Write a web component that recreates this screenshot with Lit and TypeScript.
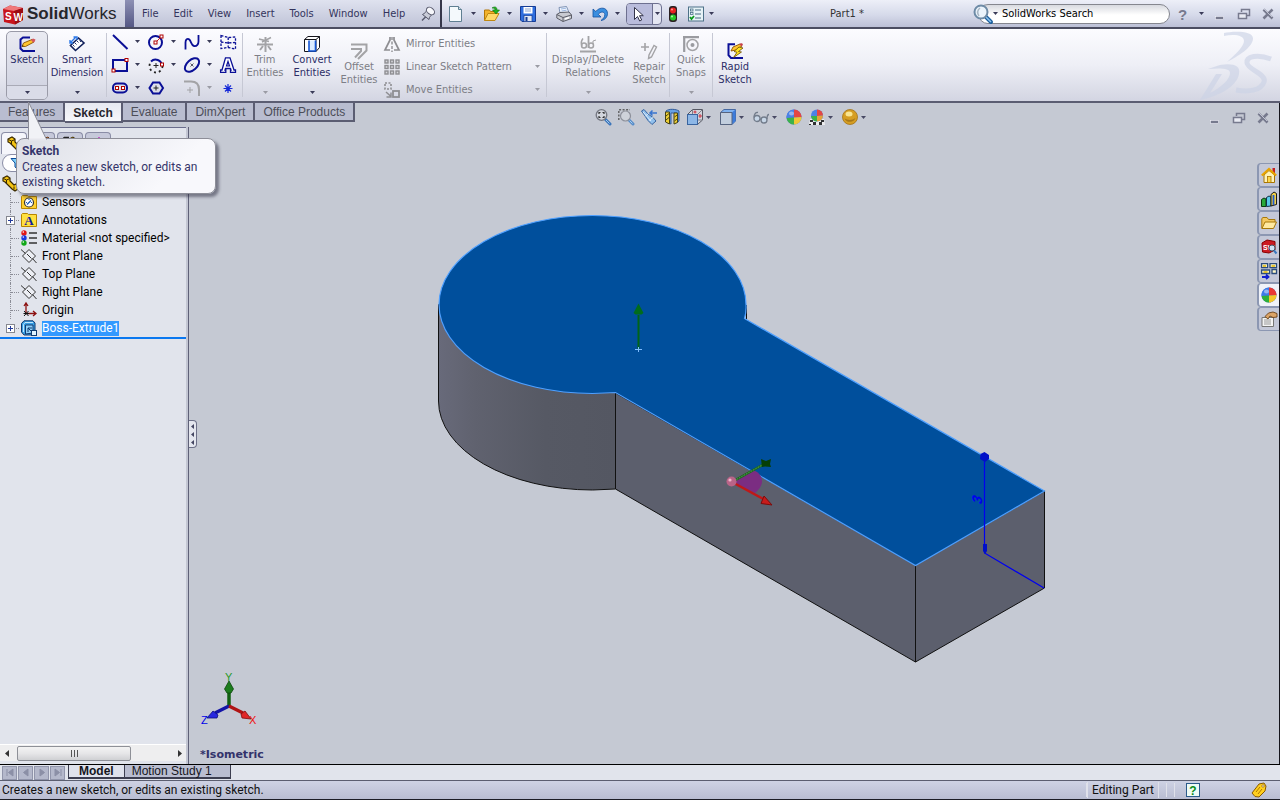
import { LitElement, html, css, svg, nothing, TemplateResult } from "lit";
import { customElement } from "lit/decorators.js";
import { classMap } from "lit/directives/class-map.js";

type Glyph = ReturnType<typeof svg>;

const icon = (body: Glyph, w = 16, h = 16): TemplateResult =>
  html`<svg class="ico" width=${w} height=${h} viewBox="0 0 ${w} ${h}" aria-hidden="true">${body}</svg>`;

const arrow = (muted = false): TemplateResult =>
  html`<svg class="ico" width="5" height="3" viewBox="0 0 5 3" aria-hidden="true">
    <path d="M0 0h5L2.5 3z" fill=${muted ? "#9a9ba4" : "#3a3b58"} />
  </svg>`;

const NAVY = "#0a0f96";
const GREY = "#a3a3a6";
const handle = (x: number, y: number) =>
  svg`<rect x=${x} y=${y} width="3" height="3" fill="#fff" stroke="#b00000" stroke-width="1"/>`;

const I = {
  cubeLogo: svg`<path d="M2 7 9 3.500 22 6 22 18 14 22.500 3 20z" fill="#c8141c"/><path d="M2 7 9 3.500 22 6 13 9z" fill="#f0787a"/><path d="M13 9 22 6V18l-8 4.500z" fill="#9c0c12"/>
    <text x="4" y="18" class="cube">S</text><text x="12.500" y="18.500" class="cube">W</text>`,
  pin: svg`<path d="M2 14.500 6 10.500" stroke="#55576a" stroke-width="1.500"/><path d="M2.500 8.500C5 7 6 6.500 6.500 4l6 4.500c-2 1-3 2-3.500 5z" fill="#c9ccd8" stroke="#55576a"/><ellipse cx="10.500" cy="5" rx="4.500" ry="3.200" transform="rotate(40 10.500 5)" fill="#f6f7fb" stroke="#55576a"/>`,
  newDoc: svg`<path d="M1.500.5h9l3 3v12h-12z" fill="#f4f9fc" stroke="#5f7f92"/><path d="M10.500.5v3h3" fill="#cfe0ea" stroke="#5f7f92"/>`,
  open: svg`<path d="M.5 14.500V4h5l1 1.500h6v3" fill="#f3b32c" stroke="#b37708"/><path d="M.5 14.500 4 7.500h11l-4 7z" fill="#ffd968" stroke="#c08812"/><path d="M8 2c3-2 5-1 5 2h2.500L12 8 8.500 4H11c0-1.500-1-2-3-2z" fill="#22b022" stroke="#0b760b" stroke-width=".6"/>`,
  save: svg`<path d="M.5.5h15v15H2L.5 14z" fill="#2f6ede" stroke="#163c94"/><rect x="3.500" y="1" width="9" height="6.500" fill="#fff"/><path d="M5 3h6M5 5h6" stroke="#8fa6d0"/><rect x="4" y="9.500" width="8" height="6" fill="#dfe6f4" stroke="#163c94" stroke-width=".7"/><rect x="5.500" y="11" width="2" height="4" fill="#163c94"/>`,
  print: svg`<path d="M4 7 3 1.500 10.500.5 13 6.500z" fill="#eef4ff" stroke="#7f93b4"/><path d="M5 3l5-.8M5.500 5l5-.8" stroke="#9db8e0"/><path d="M.8 8.500 4 6.500l9-.5 2.500 3v3.500L7 15.500.8 12z" fill="#c9cbd2" stroke="#5c5e68"/><path d="M.8 8.500 7 11.500l8.500-2.500M7 11.500v4" stroke="#5c5e68" fill="none"/><path d="m9 13 4-1.500" stroke="#fff" stroke-width="1.500"/>`,
  undo: svg`<path d="M1 3v8h8L6.300 8.300C8 5.500 12.500 5 12.800 8.500 13 11 11 13 9 14.500c4-.5 6.500-3.500 6.500-7C15.500 1 7.500.5 3.800 5.500z" fill="#3b8fe0" stroke="#1450a0" stroke-width=".8"/>`,
  cursor: svg`<path d="M3.500 1.500v12l3-3 2.200 4.500 2-1L8.500 9.700h3.800z" fill="#fff" stroke="#33344a"/>`,
  traffic: svg`<rect x="4" y="0" width="8" height="16" rx="3" fill="#2a2020"/><circle cx="8" cy="4.500" r="3" fill="#e82020"/><circle cx="8" cy="11.500" r="3" fill="#28c828"/><circle cx="7" cy="3.500" r="1" fill="#ff9a90"/><circle cx="7" cy="10.500" r="1" fill="#a8ffa0"/>`,
  options: svg`<rect x=".5" y="1" width="15" height="14" fill="#e6f2f6" stroke="#4d7188"/><path d="M7 4h6M7 8h6M7 12h6" stroke="#7b98a8" stroke-width="1.500"/><rect x="2.500" y="3" width="2.500" height="2" fill="none" stroke="#4d7188" stroke-width=".8"/><rect x="2.500" y="6.500" width="2.500" height="2" fill="none" stroke="#4d7188" stroke-width=".8"/><path d="m2 11 1.500 2L6 10" stroke="#0a9a1a" stroke-width="1.800" fill="none"/>`,
  search: svg`<path d="m13 13 5 5" stroke="#1d5f9e" stroke-width="4" stroke-linecap="round"/><path d="m13 13 5 5" stroke="#8cc4ee" stroke-width="1.500"/><circle cx="8" cy="8" r="6.500" fill="#eaf3fb" stroke="#6e8ba6" stroke-width="2"/><path d="M6 12C4 9 4.500 6 7 4" stroke="#a9b7c4" fill="none" stroke-width="1.500"/>`,
  help: svg`<text x="3" y="14" class="q">?</text>`,
  min: svg`<rect x="3.500" y="10.500" width="8" height="3" fill="#777a8e" stroke="#f0f1f8" stroke-width=".6"/>`,
  restore: svg`<path d="M5.500 6V3.500h8v6h-2.500" fill="none" stroke="#777a8e" stroke-width="1.500"/><rect x="2.500" y="7.500" width="8" height="5" fill="#e8eaf2" stroke="#777a8e" stroke-width="1.500"/>`,
  close: svg`<path d="m3.500 3.500 9 9M12.500 3.500l-9 9" stroke="#777a8e" stroke-width="2.600"/><path d="m4 3 8 8" stroke="#d4d7e4" stroke-width=".8"/>`,

  sketch: svg`<path d="M11 1.500H4L1.500 3.500v9L4 15h12" fill="none" stroke=${NAVY} stroke-width="2"/><path d="m3 10.500 1.500-3.500L13 3.500l2 2.500-8.500 4.500z" fill="#ffc52e" stroke="#8a5200" stroke-width=".9"/><path d="m12 4 2-1.500 2.500 1-1 2.500-1.500.5z" fill="#d4565c"/><path d="m3 10.500.7-1.600 1 1.200z" fill="#221"/>`,
  dimension: svg`<path d="M6.500 14.500 1.500 9.500 9.500 2 15 7z" fill="#fff" stroke="#10205a" stroke-width="1.600"/><path d="m4 9 1.500 1.500M6 7l1.500 1.500M8 5l1.500 1.500M10.500 4.500 12 6" stroke="#10205a" stroke-width=".9"/><path d="m1.500 6.500 5-5M1 4v3h3M4.500 1H8v3" fill="none" stroke="#2c78e8" stroke-width="1.400"/>`,
  line: svg`<path d="m1 1 14.500 14" stroke=${NAVY} stroke-width="2"/>`,
  circle: svg`<circle cx="7.500" cy="8.500" r="6.500" fill="none" stroke=${NAVY} stroke-width="2"/><path d="m8 8 5-5" stroke="#c22"/>${handle(6, 7)}${handle(12, 1)}`,
  spline: svg`<path d="M1.500 15.500V8.500c0-3 2-4.500 3.800-3 2 1.800 2 6 4.700 6.500 3 .5 4.500-2 4.500-4.500V1" fill="none" stroke=${NAVY} stroke-width="1.800"/>`,
  planes: svg`<path d="M1 1.500 8.500 3.500 15.500 3v12L8 13.500 1 14.500zM8.200 3.500v10M1 8l7 1 7.500-.5" fill="none" stroke=${NAVY} stroke-width="1.300" stroke-dasharray="2.500 1.500"/>`,
  rect: svg`<rect x="1" y="3" width="14" height="11" fill="none" stroke=${NAVY} stroke-width="2"/>${handle(0, 12)}${handle(13, 1.5)}`,
  arc: svg`<path d="M3 4.500A6.500 6.500 0 0 1 14 8.500" fill="none" stroke=${NAVY} stroke-width="2"/><path d="M14.500 9A6.500 6.500 0 0 1 1.500 9c0-2 .5-3.500 1.500-4.500" fill="none" stroke="#222" stroke-width="1.800" stroke-dasharray="2 3"/><path d="M5.500 8.500h5M8 6v5" stroke="#222"/>${handle(12.5, 6)}`,
  ellipse: svg`<ellipse cx="8" cy="8" rx="8.500" ry="5" transform="rotate(-42 8 8)" fill="none" stroke=${NAVY} stroke-width="2"/><path d="m6.500 6.500 3 3m0-3-3 3" stroke="#334" stroke-width=".8"/>`,
  textA: svg`<path d="M5.500.8h4.500L14 13h1.500v2.300h-5V13H11l-.5-1.500H5.500L5 13h.8v2.300H.6V13H2z" fill="#fff" stroke=${NAVY} stroke-width="1.300"/><path d="M8 4.500 6.500 9h3z" fill="#eef" stroke=${NAVY} stroke-width="1.200"/>`,
  slot: svg`<rect x="1" y="3.500" width="14" height="9" rx="4" fill="none" stroke=${NAVY} stroke-width="2"/>${handle(3.5, 6.5)}${handle(9.5, 6.5)}`,
  polygon: svg`<path d="M5 2.500h6.500L15 8l-3.500 5.500H5L1.500 8z" fill="none" stroke=${NAVY} stroke-width="2"/><path d="M5.500 8h5M8 5.500v5" stroke="#222"/>`,
  fillet: svg`<path d="M0 1.500h7c5 0 8 3 8 8V16" fill="none" stroke=${GREY} stroke-width="2"/><path d="M3 10h6M6 7v6" stroke=${GREY}/>`,
  point: svg`<path d="M3.500 8.500h9M8 4v9M5 5.500l6 6m0-6-6 6" stroke="#1428d8" stroke-width="1.200"/>`,
  trim: svg`<path d="M0 8.500h16M8.500 1v15" stroke=${GREY} stroke-width="2"/><path d="M2 3 12 5.500M14 1.500 5 6" stroke=${GREY} stroke-width="1.500"/><path d="m6 10-3 4M11 10l3 4" stroke=${GREY} stroke-width="2"/>`,
  convert: svg`<path d="M.5 3.500 4 .5h11.500v11L12 15.500H.5zM.5 3.500H12v12M12 3.500l3.500-3" fill="#fff" stroke="#14141c"/><path d="M5 4.500v10.500h6.500v-10.500" fill="#dcecff" stroke="#1456d6" stroke-width="1.600"/>`,
  offset: svg`<path d="M0 1.500h15.500v6L7 16M0 6h10v2l-6 6.500" fill="none" stroke=${GREY} stroke-width="2"/>`,
  mirror: svg`<path d="M6 1v3L1 14h5M10 1v3l5 10h-5" fill="none" stroke="#8e8e92" stroke-width="1.700"/><path d="M8 1v15" stroke="#8e8e92" stroke-width="1.400" stroke-dasharray="3 1.500"/>`,
  linear: svg`${[1, 6.5, 12].map((y) => [1, 6.5, 12].map((x) => svg`<rect x=${x} y=${y} width="3" height="3" fill="#d8d8dc" stroke="#8e8e92" stroke-width="1.400"/>`))}`,
  move: svg`<rect x="1" y="1" width="6" height="6" fill="none" stroke="#8e8e92" stroke-width="1.600" stroke-dasharray="2 1.500"/><rect x="9" y="9" width="6" height="6" fill="none" stroke="#8e8e92" stroke-width="1.800"/><path d="m2 10 4.500 4M7 10.500V15H2.500" stroke="#8e8e92" fill="none" stroke-width="1.500"/>`,
  relations: svg`<path d="M0 15.500h16M8.500 0v12" stroke=${GREY} stroke-width="1.800"/><path d="M3 2.500C1 5 1 8 2 10" stroke=${GREY} fill="none" stroke-width="1.500"/><circle cx="4" cy="9.500" r="2.500" fill="none" stroke=${GREY} stroke-width="1.500"/><circle cx="11" cy="9.500" r="2.500" fill="none" stroke=${GREY} stroke-width="1.500"/><path d="M13 8V5l3-1" stroke=${GREY} fill="none"/>`,
  repair: svg`<path d="M0 4h8M4 0v8" stroke=${GREY} stroke-width="1.600"/><path d="M7.500 15.500 8 12l5-9.500 2.500 1.500-5 10z" fill="none" stroke=${GREY} stroke-width="1.400"/>`,
  snaps: svg`<path d="M0 1.200h16M1.200 1v15" stroke="#9a9ba0" stroke-width="2.200"/><circle cx="9.500" cy="9" r="5.500" fill="none" stroke=${GREY} stroke-width="1.500"/><circle cx="9.500" cy="9" r="2" fill="#9a9ba0"/>`,
  rapid: svg`<path d="M8 1.200H1.500v11L4 15h12" fill="none" stroke=${NAVY} stroke-width="2"/><path d="m4 8 2-4 7-3 2 2-6 4z" fill="#ffc52e" stroke="#8a5200" stroke-width=".9"/><path d="m12 1.500 2-1.500 2 1-1 2.500z" fill="#c8444c"/><path d="M12 4 7 8.500l3 .8-3.500 5.200 8-5.500-3-.5L16 5z" fill="#ffe51e" stroke="#6b4a00" stroke-width=".8"/>`,

  zoomFit: svg`<path d="m10.500 10.500 4.500 4.500" stroke="#2d6cb8" stroke-width="3" stroke-linecap="round"/><path d="m11 11 3.500 3.500" stroke="#9cc8f0"/><circle cx="6.500" cy="6" r="5.300" fill="#d4d7df" stroke="#6b6e78" stroke-width="1.300"/><path d="M4 5V3.500h1.500M9 5V3.500H7.500M4 7v1.500h1.500M9 7v1.500H7.500" stroke="#222" fill="none" stroke-width="1.200"/>`,
  zoomArea: svg`<path d="m11 11 4 4" stroke="#4a86c8" stroke-width="3" stroke-linecap="round"/><path d="m11.500 11.500 3 3" stroke="#a8d0f4"/><circle cx="7.500" cy="7" r="5" fill="#d0d3db" stroke="#888b95" stroke-width="1.200"/><path d="M.8 11V.8H12" fill="none" stroke="#555" stroke-width="1.400" stroke-dasharray="2 1.500"/>`,
  prevView: svg`<path d="M.5 2 3 .5 7 5l5 3.500 3 3.500-4 3.500-4-4-3-4.500z" fill="#8cc0f0" stroke="#2a5a9a"/><path d="m4.500 7 3-2.500M8 11.500l4-3M2 3l8 9" stroke="#e0f0ff" fill="none"/><path d="M9 4h7M11.500 1.500 9 4l2.500 2.500" stroke="#2a6cd0" fill="none" stroke-width="1.500"/>`,
  section: svg`<path d="M2 2c3-2.500 10-2 13 0v10l-2 1.500V4H7v11l-5-2z" fill="#5c9ce8" stroke="#234f92"/><path d="M1.500 3h4v12l-4-2z" fill="#f2d024" stroke="#3a3400"/><path d="M10 4h3.500v9.500L10 15z" fill="#f2d024" stroke="#3a3400"/><path d="m2 7 3-2.500M2 11l3-2.500M10.500 8 13 6M10.500 12l2.500-2" stroke="#3a3400"/>`,
  orient: svg`<path d="M.5 5.500 5.500.5h10V11l-5 4.500H.5z" fill="#d4d6de" stroke="#4a4c58"/><path d="M5.500.5V5M10.500 5.500l5-5M10.500 11h5" stroke="#777a84"/><rect x=".5" y="5.500" width="10" height="10" fill="#88b6ea" stroke="#2a5a9a"/><path d="M8 1.500v3M6.500 3h3M13 5v4M11.500 7h3.500" stroke="#c23"/>`,
  display: svg`<path d="M.5 3.500 4 .5h11.500V12L12 15.500H.5z" fill="#78b0f4" stroke="#3a5f9c"/><path d="M12 3.500 15.500.5V12L12 15.500z" fill="#2f74dc"/><path d="M.5 3.500H12v12H.5z" fill="#c2cfe0" stroke="#4a5a78"/>`,
  glasses: svg`<circle cx="4" cy="9.500" r="3" fill="#c8d8ea" stroke="#6a7484" stroke-width="1.300"/><circle cx="11" cy="11" r="3" fill="#c8d8ea" stroke="#6a7484" stroke-width="1.300"/><path d="M1 8.500C1 5 3 3 5 3.500M14 10c0-3 .5-4.500 2-4.500M7 10l1.500.5" fill="none" stroke="#6a7484" stroke-width="1.300"/>`,
  ball: svg`<circle cx="8" cy="8" r="7.600" fill="#3a6ee0"/><path d="M8 .4A7.600 7.600 0 0 1 15.600 8L8 8.500z" fill="#e83a34"/><path d="M8 .4A7.600 7.600 0 0 0 .6 9L8 8.500z" fill="#3f7be8"/><path d="M.6 9A7.600 7.600 0 0 0 8 15.600V8.500z" fill="#2fb03a"/><path d="M15.600 8A7.600 7.600 0 0 1 8 15.600V8.500z" fill="#f4c828"/><ellipse cx="5.500" cy="4.500" rx="2.500" ry="2" fill="#fff" opacity=".45"/>`,
  scene: svg`<path d="M1 10h14l1 6H0z" fill="#f2f2f2"/><path d="M1 11h3v2H1zM4 13h3v3H4zM10 13h3v3h-3zM12 11h3v2h-3zM0 15h2v1H0z" fill="#222"/><circle cx="8" cy="6.500" r="6" fill="#3f7be8"/><path d="M8 .5a6 6 0 0 1 6 6L8 7z" fill="#e83a34"/><path d="M2 7a6 6 0 0 0 6 5.500V7z" fill="#2fb03a"/><path d="M14 6.500a6 6 0 0 1-6 6V7z" fill="#e8a028"/>`,
  gold: svg`<circle cx="8" cy="8" r="7.500" fill="#d89a10" stroke="#a06a04" stroke-width=".8"/><path d="M2.500 9.500c3 2 8 2 11-.5a6 6 0 0 1-11 .5z" fill="#8f5c02" opacity=".7"/><ellipse cx="7" cy="5" rx="3.500" ry="2.500" fill="#ffe98a"/>`,

  house: svg`<path d="M11.500 1h2.500v5h-2.500z" fill="#c42020"/><path d="M3 8v7.500h10.500V8L8 3.500z" fill="#fff3b8" stroke="#a87400"/><path d="M.8 8.500 8 2l7.200 6.500" fill="none" stroke="#e8a400" stroke-width="2.200"/><rect x="6.500" y="9.500" width="3.500" height="6" fill="#ffd84a" stroke="#a87400" stroke-width=".8"/>`,
  library: svg`<path d="M.5 8.500 3 7l2 1v7.500H.5z" fill="#28a838" stroke="#0b3a12"/><path d="M5.500 6.500 8 5l2 1v9l-4.500.5z" fill="#58c8e8" stroke="#10304a"/><path d="M10 3.500 13 1l2.500 1.500v11L10 15z" fill="#f0d048" stroke="#1a1a1a"/><path d="M12.500 4v10" stroke="#205ad0" stroke-width="1.800"/>`,
  folder: svg`<path d="M.8 13.500V3.500L2 2.500h4l1.500 2H14v3" fill="#f4c860" stroke="#a8780a"/><path d="M1 13.500 4 7h11.500L12.500 13.500z" fill="#ffe9a0" stroke="#a8780a"/>`,
  swSearch: svg`<path d="M1 4 6 1l8 1.500V11l-6 3-6.500-1z" fill="#cc1a22" stroke="#800"/><text x="2" y="11" class="tiny">SW</text><circle cx="11" cy="9" r="3" fill="#cfe2f4" stroke="#456"/><path d="m13 11.500 2.500 3" stroke="#3a78c0" stroke-width="2"/>`,
  palette: svg`<path d="M.6.6h6v4h-6zM9 .6h6.500v4H9zM.6 7h8v3.500h-8zM11 6.500h4.500v4H11z" fill="#fff8c8" stroke="#2c4c7c" stroke-width="1.300"/><path d="M2 3h3M10.500 3h3.500M2.500 9h4" stroke="#e0b400" stroke-width="1.500"/><path d="M1 14h6M5 11.500 7.500 14 5 16" stroke="#1220d0" stroke-width="1.800" fill="none"/>`,
  props: svg`<path d="M1 6.500h11.500v9H1z" fill="#f4f4f4" stroke="#777"/><path d="M3 9h7M3 11h7M3 13h7" stroke="#999"/><path d="M4 5.500 7.500 2 12 1l4 1.500V6l-4 .5-3-1.500-2 3z" fill="#dba468" stroke="#6b4218" stroke-width=".9"/>`,

  part: svg`<path d="m1 3 4-2 3 2v3l4 4 2-1 2 2v3l-3 2-3-2-7-7-2-1z" fill="#f4c412" stroke="#3a2a00" stroke-width="1.200"/><path d="m1.500 3.500 3 1.500L8 3.500M4.500 5v3M12 11.500v3" stroke="#3a2a00" fill="none"/>`,
  filter: svg`<path d="M1 1.500h10L7.500 6v6L5 10V6z" fill="#7fd0f8" stroke="#0a4a9a"/>`,
  prop: svg`<path d="m1 12 4-8 8-3 3 3-5 6z" fill="#dca070" stroke="#6b3a18"/>`,
  config: svg`<path d="M1 1.500h5M1 1v13M1 7h4" stroke="#222" stroke-width="1.500"/><path d="m6 3 4-2 4 3v4l-4 2-4-3z" fill="#f4c412" stroke="#3a2a00"/>`,
  dimx: svg`<path d="M8 1v14M1 8h14" stroke="#c030c0" stroke-width="1.500"/><circle cx="8" cy="8" r="4.500" fill="none" stroke="#c030c0" stroke-width="1.500"/>`,
  sensors: svg`<path d="M.5 14.500v-12l1-1h5l1 1h8v12z" fill="#ffd030" stroke="#b88600"/><circle cx="8" cy="8.500" r="4.500" fill="#fff" stroke="#333" stroke-width="1.200"/><path d="m6 10.500 4-4M8 5v1M11 8.500h-1M5 8.500h1" stroke="#1a58b8" stroke-width="1.200"/>`,
  annot: svg`<path d="M.5 14.500v-12l1-1h5l1 1h8v12z" fill="#ffe040" stroke="#b88600"/><text x="8" y="13" text-anchor="middle" class="an">A</text>`,
  material: svg`<circle cx="3" cy="3" r="2.700" fill="#e01818"/><circle cx="3" cy="8" r="2.700" fill="#1838e0"/><circle cx="3" cy="13" r="2.700" fill="#10a818"/><circle cx="2.300" cy="2" r=".8" fill="#fff"/><circle cx="2.300" cy="7" r=".8" fill="#fff"/><circle cx="2.300" cy="12" r=".8" fill="#fff"/><path d="M8 3h8M8 8h8M8 13h8" stroke="#333" stroke-width="1.400"/>`,
  plane: svg`<path d="M1.500 8 8 1.500 14.500 8 8 14.500z" fill="#eceef4" stroke="#333"/><path d="M0 1.500l4.500 4M11.500 10.500l4 4.500M6 6l4.500 4.500" stroke="#333"/>`,
  origin: svg`<path d="M5 11V2M5 11.500h9M3 4l2-3 2 3M12 9l3 2.500-3 2.500" stroke="#8c1010" fill="none" stroke-width="1.300"/><path d="m3 9 4.500 5m0-5L3 14M2.500 11.500H8" stroke="#111"/>`,
  boss: svg`<path d="M.5 3.500 3 .8h9l2 2.200v9l-3 3H3l-2.500-3z" fill="#3aa0e4" stroke="#103a70"/><path d="M2.500 12V4.500L4 2.500h8" stroke="#bfe6ff" fill="none"/><path d="M4.500 5H12v8l-7.500 1z" fill="#8fd0f8" stroke="#103a70"/><path d="m7 8 5 5M7 8h4M7 8v4" stroke="#103a70" fill="none"/><rect x="10.500" y="10.500" width="5" height="5" fill="#dff2ff" stroke="#103a70"/>`,
  tag: svg`<path d="M1 11 8 2l5-1 2 3-1 5-6 6-4-.5z" fill="#ffcf1e" stroke="#8a5a00"/><path d="m5 10 4-5M7 12l4-5" stroke="#b07800"/><circle cx="12" cy="4" r="1.200" fill="#fff" stroke="#8a5a00" stroke-width=".7"/>`,
  quick: svg`<rect x=".5" y=".5" width="13" height="13" fill="#eefaf4" stroke="#2a5a8a"/><text x="7" y="12" text-anchor="middle" class="qh">?</text>`,
  ds: svg`<g fill="#ccd3e6" opacity=".65"><path d="M26 1C34-1 56-2 55 7 54 16 40 24 29 30 38 22 46 14 46 9 46 3 36 2 26 4z"/><path d="M10 37 22 33C34 31 43 33 41 42 39 54 22 64 2 68L18 42h6L12 61C24 55 32 47 32 41 32 36 22 36 10 37z"/><path d="M73 27C60 22 48 24 49 31 50 38 69 42 66 50 63 59 50 60 38 58" fill="none" stroke="#ccd3e6" stroke-width="5"/></g>`,
};

const MENU = ["File", "Edit", "View", "Insert", "Tools", "Window", "Help"];
const STANDARD: [string, Glyph][] = [
  ["New", I.newDoc],
  ["Open", I.open],
  ["Save", I.save],
  ["Print", I.print],
  ["Undo", I.undo],
];
const ENTITIES: [string, Glyph, boolean, boolean][] = [
  ["Line", I.line, true, false],
  ["Circle", I.circle, true, false],
  ["Spline", I.spline, true, false],
  ["Plane", I.planes, false, false],
  ["Rectangle", I.rect, true, false],
  ["Arc", I.arc, true, false],
  ["Ellipse", I.ellipse, true, false],
  ["Text", I.textA, false, false],
  ["Slot", I.slot, true, false],
  ["Polygon", I.polygon, false, false],
  ["Fillet", I.fillet, true, true],
  ["Point", I.point, false, false],
];
const HUD: [string, Glyph, boolean][] = [
  ["Zoom to Fit", I.zoomFit, false],
  ["Zoom to Area", I.zoomArea, false],
  ["Previous View", I.prevView, false],
  ["Section View", I.section, false],
  ["View Orientation", I.orient, true],
  ["Display Style", I.display, true],
  ["Hide/Show Items", I.glasses, true],
  ["Edit Appearance", I.ball, false],
  ["Apply Scene", I.scene, true],
  ["View Settings", I.gold, true],
];
const TREE: [string, Glyph, boolean][] = [
  ["Sensors", I.sensors, false],
  ["Annotations", I.annot, true],
  ["Material <not specified>", I.material, false],
  ["Front Plane", I.plane, false],
  ["Top Plane", I.plane, false],
  ["Right Plane", I.plane, false],
  ["Origin", I.origin, false],
  ["Boss-Extrude1", I.boss, true],
];
const TASKS: [string, Glyph][] = [
  ["Resources", I.house],
  ["Design Library", I.library],
  ["File Explorer", I.folder],
  ["Search", I.swSearch],
  ["View Palette", I.palette],
  ["Appearances", I.ball],
  ["Custom Properties", I.props],
];

const shared = css`
  :host {
    display: block;
    font-family: "DejaVu Sans Condensed", "DejaVu Sans", "Liberation Sans", sans-serif;
    font-size: 11px;
    line-height: 13px;
    color: #33345c;
  }
  * {
    box-sizing: border-box;
  }
  button {
    font: inherit;
    color: inherit;
    background: none;
    border: 0;
    padding: 0;
    margin: 0;
  }
  .ico {
    display: block;
    flex: none;
    overflow: visible;
  }
`;

@customElement("title-bar")
class TitleBar extends LitElement {
  static styles = [
    shared,
    css`
      .bar {
        display: flex;
        align-items: stretch;
        height: 29px;
        background: linear-gradient(#edeff8, #d6daea 55%, #bcc0d6);
        border-bottom: 2px solid #4b4d61;
      }
      .brand {
        display: flex;
        align-items: center;
        width: 125px;
        padding-left: 1px;
        gap: 2px;
        background: linear-gradient(#dfe1ee, #c3c6d8);
        font: 17px/24px "Liberation Sans", Arial, sans-serif;
        color: #26262c;
      }
      .cube {
        font: bold 10px "Liberation Sans", sans-serif;
        fill: #fff;
      }
      .strip {
        width: 9px;
        background: linear-gradient(#8d90b4, #555885);
      }
      .menu {
        display: flex;
        align-items: center;
        gap: 15px;
        width: 308px;
        padding-left: 8px;
        background: linear-gradient(#dfe2ef, #bfc3d7);
        border-right: 2px solid #35364a;
      }
      .tools {
        display: flex;
        align-items: center;
        padding-left: 4px;
      }
      .cell {
        display: flex;
        align-items: center;
        width: 36px;
        height: 24px;
        gap: 5px;
      }
      .select {
        display: flex;
        align-items: center;
        width: 36px;
        height: 22px;
        border: 1px solid #6d7090;
        border-radius: 4px;
        background: #e4e6f2;
      }
      .pick {
        padding: 2px 5px 2px 4px;
        background: #b9bcdc;
        border-right: 1px solid #6d7090;
        border-radius: 3px 0 0 3px;
        width: 26px;
      }
      .tight {
        padding: 0 2px;
      }
      .light {
        margin: 0 7px 0 3px;
      }
      .doc {
        flex: 1;
        align-self: center;
        padding-right: 8px;
        text-align: center;
        color: #333;
      }
      .find {
        display: flex;
        align-items: center;
        position: relative;
        width: 192px;
        margin-right: 5px;
      }
      .glass {
        position: absolute;
        left: -5px;
        top: 4px;
      }
      .drop {
        position: absolute;
        left: 15px;
        top: 12px;
      }
      .find input {
        font: inherit;
        color: #000;
        width: 100%;
        height: 20px;
        padding: 0 8px 1px 23px;
        border: 1px solid #85878f;
        border-radius: 10px;
        background: linear-gradient(#d8dae0, #fff 55%);
        outline: 0;
      }
      .win {
        display: flex;
        align-items: center;
        gap: 8px;
        padding-right: 4px;
      }
      .q {
        font: bold 15px "Liberation Sans", sans-serif;
        fill: #777a8e;
      }
    `,
  ];
  render() {
    return html`<header class="bar">
      <div class="brand">${icon(I.cubeLogo, 24, 24)}<span><b>Solid</b>Works</span></div>
      <div class="strip"></div>
      <nav class="menu">
        ${MENU.map((m) => html`<button>${m}</button>`)}
        <button aria-label="Pin menu">${icon(I.pin)}</button>
      </nav>
      <div class="tools">
        ${STANDARD.map(([n, g]) => html`<button class="cell" aria-label=${n}><span class="tight">${icon(g)}</span>${arrow()}</button>`)}
        <div class="select">
          <button class="pick" aria-label="Select">${icon(I.cursor)}</button>
          <button class="tight" aria-label="Select options">${arrow()}</button>
        </div>
        <button class="light" aria-label="Rebuild">${icon(I.traffic)}</button>
        <button class="cell" aria-label="Options">${icon(I.options)}${arrow()}</button>
      </div>
      <div class="doc">Part1 *</div>
      <label class="find">
        <input type="text" aria-label="Search" value="SolidWorks Search" />
        <span class="glass">${icon(I.search, 20, 20)}</span>
        <span class="drop">${arrow()}</span>
      </label>
      <div class="win">
        <button aria-label="Help">${icon(I.help)}</button>
        <button aria-label="Help options">${arrow()}</button>
        <button aria-label="Minimize">${icon(I.min)}</button>
        <button aria-label="Restore">${icon(I.restore)}</button>
        <button aria-label="Close">${icon(I.close)}</button>
      </div>
    </header>`;
  }
}

@customElement("command-ribbon")
class CommandRibbon extends LitElement {
  static styles = [
    shared,
    css`
      .ribbon {
        display: flex;
        height: 74px;
        padding-left: 6px;
        background: linear-gradient(#fcfcff, #eeeff6 50%, #d3d5e2);
        border-bottom: 2px solid #5b5d72;
      }
      .big {
        display: flex;
        flex-direction: column;
        align-items: center;
        width: 58px;
        height: 69px;
        margin-top: 2px;
        padding-top: 5px;
        gap: 1px;
        text-align: center;
        color: #2c2d66;
      }
      .big.low {
        padding-top: 12px;
      }
      .big.off {
        color: #7d7e86;
      }
      .lab {
        display: block;
        white-space: nowrap;
      }
      .fall {
        margin-top: auto;
        padding-bottom: 6px;
        width: 100%;
        display: flex;
        justify-content: center;
      }
      .hot {
        border: 1px solid #9a9ba8;
        border-radius: 5px;
        padding-top: 4px;
        background: linear-gradient(#eaebf2, #cdd0df);
      }
      .hot .fall {
        border-top: 1px solid #a9aab6;
        padding: 5px 0;
        background: #dadce8;
        border-radius: 0 0 4px 4px;
      }
      .w40 {
        width: 40px;
      }
      .w42 {
        width: 42px;
      }
      .w44 {
        width: 44px;
      }
      .w50 {
        width: 50px;
      }
      .w82 {
        width: 82px;
      }
      .sep {
        width: 1px;
        margin: 4px 0;
        background: #c6c8d4;
      }
      .grid {
        display: grid;
        grid-template-columns: repeat(3, 36px) 20px;
        grid-auto-rows: 23px;
        padding: 1px 2px 0 5px;
      }
      .grid button {
        display: flex;
        align-items: center;
        gap: 7px;
      }
      .list {
        width: 165px;
        padding-top: 3px;
      }
      .row {
        display: flex;
        align-items: center;
        gap: 6px;
        width: 100%;
        height: 23px;
        padding: 0 6px 0 3px;
        color: #7d7e86;
      }
      .row .lab {
        flex: 1;
        text-align: left;
      }
      .mark {
        margin-left: auto;
        padding: 3px 8px 0 0;
      }
    `,
  ];
  private big(name: string, glyph: Glyph, lines: string[], drop: boolean, opts: Record<string, boolean> = {}) {
    return html`<button class=${classMap({ big: true, low: !drop, ...opts })} aria-label=${name}>
      ${icon(glyph)}
      <span>${lines.map((l) => html`<span class="lab">${l}</span>`)}</span>
      ${drop ? html`<span class="fall">${arrow(!!opts.off)}</span>` : nothing}
    </button>`;
  }
  private row(name: string, glyph: Glyph, drop: boolean) {
    return html`<button class="row">${icon(glyph)}<span class="lab">${name}</span>${drop ? arrow(true) : nothing}</button>`;
  }
  render() {
    const sep = html`<div class="sep"></div>`;
    return html`<div class="ribbon">
      ${this.big("Sketch", I.sketch, ["Sketch"], true, { hot: true, w42: true })}
      ${this.big("Smart Dimension", I.dimension, ["Smart", "Dimension"], true)} ${sep}
      <div class="grid">
        ${ENTITIES.map(([n, g, d, off]) => html`<button aria-label=${n}>${icon(g)}${d ? arrow(off) : nothing}</button>`)}
      </div>
      ${sep} ${this.big("Trim Entities", I.trim, ["Trim", "Entities"], true, { off: true, w44: true })}
      ${this.big("Convert Entities", I.convert, ["Convert", "Entities"], true, { w50: true })}
      ${this.big("Offset Entities", I.offset, ["Offset", "Entities"], false, { off: true, w44: true })}
      <div class="list">
        ${this.row("Mirror Entities", I.mirror, false)} ${this.row("Linear Sketch Pattern", I.linear, true)}
        ${this.row("Move Entities", I.move, true)}
      </div>
      ${sep} ${this.big("Relations", I.relations, ["Display/Delete", "Relations"], true, { off: true, w82: true })}
      ${this.big("Repair Sketch", I.repair, ["Repair", "Sketch"], false, { off: true, w40: true })} ${sep}
      ${this.big("Quick Snaps", I.snaps, ["Quick", "Snaps"], true, { off: true, w42: true })} ${sep}
      ${this.big("Rapid Sketch", I.rapid, ["Rapid", "Sketch"], false, { w44: true })}
      <div class="mark">${icon(I.ds, 74, 66)}</div>
    </div>`;
  }
}

@customElement("feature-panel")
class FeaturePanel extends LitElement {
  static styles = [
    shared,
    css`
      :host {
        display: flex;
      }
      .panel {
        flex: 1;
        display: flex;
        flex-direction: column;
        min-width: 0;
        background: #e1e4ec;
        border-right: 2px solid #c3c6d3;
        box-shadow: 1px 0 0 #5f6178;
      }
      .tabs {
        display: flex;
        gap: 2px;
        height: 26px;
        padding: 4px 0 0 1px;
        border-top: 1px solid #6a6d8c;
      }
      .tabs button {
        width: 26px;
        height: 22px;
        padding: 0 5px;
        overflow: hidden;
        border: 1px solid #8a8da6;
        border-bottom: 0;
        border-radius: 4px 4px 0 0;
        background: #c6c9da;
      }
      .tabs .on {
        background: #f5f6fb;
      }
      .filter {
        display: flex;
        width: 40px;
        height: 18px;
        margin: 1px 0 3px 2px;
        padding: 2px 7px;
        border: 1px solid #8a8da6;
        border-radius: 9px;
        background: #fff;
      }
      .root {
        height: 18px;
        padding-left: 2px;
      }
      ul {
        list-style: none;
        margin: 0;
        padding: 0 0 0 10px;
        border-bottom: 2px solid #0a78f0;
      }
      li {
        display: flex;
        align-items: center;
        height: 18px;
        font: 12px/15px Roboto, "Open Sans", sans-serif;
        color: #000;
        border-left: 1px dotted #8a8c96;
      }
      li:last-child {
        border-left-color: transparent;
      }
      .stub {
        width: 8px;
        height: 1px;
        border-top: 1px dotted #8a8c96;
        margin-right: 2px;
      }
      .plus {
        width: 9px;
        height: 9px;
        margin-left: -5px;
        margin-right: 1px;
      }
      .plus + .stub {
        width: 3px;
      }
      .txt {
        margin-left: 5px;
        white-space: nowrap;
      }
      .sel {
        background: #3399ff;
        color: #fff;
      }
      .an {
        font: bold 13px "Liberation Serif", serif;
        fill: #10209c;
      }
      .space {
        flex: 1;
      }
      .scroll {
        display: flex;
        align-items: center;
        justify-content: space-between;
        height: 17px;
        margin-bottom: 3px;
        padding: 0 4px 0 5px;
        background: #eeeeef;
        border-top: 1px solid #fff;
      }
      .thumb {
        flex: none;
        width: 114px;
        height: 15px;
        margin-right: auto;
        margin-left: 8px;
        border: 1px solid #8e9097;
        border-radius: 2px;
        background: linear-gradient(#f3f3f3, #e6e6e8 50%, #cfd0d3);
        display: flex;
        align-items: center;
        justify-content: center;
        gap: 2px;
      }
      .thumb i {
        width: 1px;
        height: 7px;
        background: #555;
      }
    `,
  ];
  render() {
    return html`<div class="panel">
      <div class="tabs">
        <button class="on" aria-label="Feature tree">${icon(I.part)}</button>
        <button aria-label="Properties">${icon(I.prop)}</button>
        <button aria-label="Configurations">${icon(I.config)}</button>
        <button aria-label="Dimensions">${icon(I.dimx)}</button>
      </div>
      <button class="filter" aria-label="Filter">${icon(I.filter, 13, 13)}</button>
      <div class="root">${icon(I.part)}</div>
      <ul>
        ${TREE.map(
          ([n, g, plus], i) => html`<li>
            ${plus
              ? html`<svg class="ico plus" viewBox="0 0 9 9"><rect x=".5" y=".5" width="8" height="8" fill="#fff" stroke="#85878f" /><path d="M2 4.500h5M4.500 2v5" stroke="#223a9a" /></svg>`
              : nothing}<span class="stub"></span>${icon(g)}<span class=${classMap({ txt: true, sel: i === TREE.length - 1 })}>${n}</span>
          </li>`
        )}
      </ul>
      <div class="space"></div>
      <div class="scroll">
        <svg class="ico" width="4" height="7" viewBox="0 0 4 7"><path d="M4 0v7L0 3.500z" fill="#333" /></svg>
        <div class="thumb"><i></i><i></i><i></i></div>
        <svg class="ico" width="4" height="7" viewBox="0 0 4 7"><path d="M0 0v7l4-3.500z" fill="#333" /></svg>
      </div>
    </div>`;
  }
}

@customElement("model-view")
class ModelView extends LitElement {
  static styles = [
    shared,
    css`
      :host {
        position: relative;
        overflow: hidden;
        background: #c5c9d3;
      }
      .scene {
        position: absolute;
        inset: 0;
        width: 100%;
        height: 100%;
      }
      .hud {
        position: relative;
        display: flex;
        justify-content: center;
        padding: 6px 6px 0 0;
      }
      .hud button {
        display: flex;
        align-items: center;
        width: 23px;
        height: 16px;
        gap: 3px;
        padding-left: 4px;
      }
      .hud .d {
        width: 33px;
      }
      .hud svg {
        opacity: 0.9;
      }
      .win {
        position: absolute;
        top: 7px;
        right: 8px;
        display: flex;
        gap: 8px;
      }
      .tasks {
        position: absolute;
        top: 60px;
        right: 0;
        display: flex;
        flex-direction: column;
      }
      .tasks button {
        width: 22px;
        height: 24px;
        padding: 0 0 0 2px;
        border: 2px solid #8c97b2;
        border-width: 1px 0 1px 2px;
        border-radius: 4px 0 0 4px;
        background: #c4c8d8;
      }
      .tasks .on {
        background: #f0f2f8;
      }
      .grip {
        position: absolute;
        left: 0;
        top: 317px;
        width: 8px;
        height: 28px;
        border: 1px solid #6d7088;
        border-left: 0;
        border-radius: 0 4px 4px 0;
        background: #e4e6ee;
        padding: 0 0 0 1px;
      }
      .iso {
        position: absolute;
        left: 11px;
        bottom: 2px;
        font: bold 11px/15px "DejaVu Sans", sans-serif;
        color: #33336b;
      }
      .axis {
        font: 11px "Liberation Sans", sans-serif;
      }
      .triad {
        position: absolute;
        left: 11px;
        bottom: 37px;
      }
      .tiny {
        font: bold 7px "Liberation Sans", sans-serif;
        fill: #fff;
      }
      .dim {
        font: bold 14px "Liberation Sans", sans-serif;
        fill: #0000f0;
      }
    `,
  ];
  render() {
    return html`<svg class="scene" viewBox="189 103 1090 661" role="img" aria-label="Extruded part">
        <defs>
          <linearGradient id="side" x1="439" x2="616" y1="0" y2="0" gradientUnits="userSpaceOnUse">
            <stop offset="0" stop-color="#686a7a" />
            <stop offset=".2" stop-color="#60626f" />
            <stop offset=".6" stop-color="#565964" />
            <stop offset="1" stop-color="#545762" />
          </linearGradient>
        </defs>
        <path d="M438.500 304.500V401A154 89 0 0 0 592.500 490L615.500 489V393z" fill="url(#side)" stroke="#111" />
        <path d="M615.500 393V489L915.500 662V565z" fill="#5c5f6d" stroke="#111" />
        <path d="M915.500 565V662L1044.500 588V491z" fill="#5c5f6d" stroke="#111" />
        <path d="M746.500 305V319" stroke="#111" />
        <path d="M615.500 392.500 592.500 393.500A153.500 89 0 0 1 439 304.500A153.500 89 0 0 1 746 304.500Q746.500 312 744.500 318.500L1044.500 491 915.500 565.500z" fill="#004f9c" stroke="#4fa0ff" stroke-width="1.200" />
        <path d="M638.500 349V315" stroke="#006418" stroke-width="2" />
        <path d="m638.500 303.500-5 9.500 2 1.500h6l2-1.500z" fill="#006c1c" />
        <path d="M635 349.500h7M638.500 347v5" stroke="#7fbcff" />
        <path d="m732 482 22-11.500c5 2 8 6 8 11 0 4-3 8-7 11.500z" fill="#7b2d82" />
        <path d="m732 482 32-18" stroke="#1c6a1c" stroke-width="2.400" />
        <path d="m732 482 32-18" stroke="#70b070" stroke-width=".8" stroke-dasharray="1 1" />
        <path d="m761 459 5 2 5-2-1 5 1 3-6-.5-3 .5z" fill="#063f06" />
        <path d="m732 482 33 18" stroke="#c01818" stroke-width="2.400" />
        <path d="m764 496 8 9-11-1.500z" fill="#c81c1c" stroke="#7c0c0c" />
        <circle cx="731.500" cy="481.500" r="5" fill="#b86488" />
        <circle cx="730" cy="480" r="1.600" fill="#f0b4cc" />
        <path d="M984.500 457V553L1044 588" fill="none" stroke="#0000f0" stroke-width="1.200" />
        <path d="m984.500 452 4.500 3v4l-4 3-5-3 .5-5zM983 544h4v7l-2 3-2-3z" fill="#0010c8" />
        <text class="dim" transform="translate(982 505) rotate(-90) skewX(-20)">3</text>
      </svg>
      <div class="hud">
        ${HUD.map(([n, g, d]) => html`<button class=${classMap({ d })} aria-label=${n}>${icon(g)}${d ? arrow() : nothing}</button>`)}
      </div>
      <div class="win">
        <button aria-label="Minimize document">${icon(I.min)}</button>
        <button aria-label="Restore document">${icon(I.restore)}</button>
        <button aria-label="Close document">${icon(I.close)}</button>
      </div>
      <div class="tasks">
        ${TASKS.map(([n, g], i) => html`<button class=${classMap({ on: i === 5 })} aria-label=${n}>${icon(g)}</button>`)}
      </div>
      <button class="grip" aria-label="Collapse panel">
        <svg class="ico" width="5" height="20" viewBox="0 0 5 20"><path d="M4 0v5L1 2.500zM4 8v5l-3-2.500zM4 16v5l-3-2.500z" fill="#444662" /></svg>
      </button>
      <svg class="triad" width="58" height="58" viewBox="200 669 58 58" aria-hidden="true">
        <path d="M229 706V692" stroke="#126012" stroke-width="3.500" />
        <path d="m229 681-4.500 8 2.500 4h4l2.500-4z" fill="#1c7c1c" stroke="#0c480c" stroke-width=".8" />
        <path d="m229 706-14 7" stroke="#1414a8" stroke-width="3.500" />
        <path d="m207 718 6-7 5 4-1 3z" fill="#2828e0" stroke="#0c0c80" stroke-width=".8" />
        <path d="m229 706 14 7" stroke="#b01414" stroke-width="3.500" />
        <path d="m251 719-6-8-4 3 1 4z" fill="#e02828" stroke="#800c0c" stroke-width=".8" />
        <text class="axis" x="225" y="681" fill="#2a9a2a">Y</text>
        <text class="axis" x="201" y="724" fill="#0000e8">Z</text>
        <text class="axis" x="249" y="724" fill="#f01010">X</text>
      </svg>
      <div class="iso">*Isometric</div>`;
  }
}

@customElement("app-root")
class AppRoot extends LitElement {
  static styles = [
    shared,
    css`
      .app {
        position: relative;
        display: flex;
        flex-direction: column;
        min-height: 100vh;
        background: #c5c9d3;
      }
      .body {
        flex: 1;
        display: grid;
        grid-template-columns: 188px 1fr;
        grid-template-rows: 24px 1fr;
        border-right: 1px solid #15151c;
      }
      feature-panel {
        grid-area: 2 / 1;
      }
      model-view {
        grid-area: 1 / 2 / 3 / 3;
        margin-left: 1px;
      }
      .tabs {
        grid-area: 1 / 1;
        display: flex;
        align-items: flex-start;
        width: max-content;
        position: relative;
        z-index: 1;
      }
      .tabs button {
        height: 19px;
        padding: 1px 8px 0;
        border: 1px solid #5b5d72;
        border-width: 0 2px 2px 0;
        background: #b9bdd0;
        font: 12px/16px "Liberation Sans", Arial, sans-serif;
        color: #4c4d58;
        white-space: nowrap;
      }
      .tabs .on {
        height: 20px;
        background: linear-gradient(#e6e8f0, #f6f7fb);
        font-weight: 700;
        color: #26262e;
      }
      .sheets {
        display: flex;
        height: 16px;
        border-top: 1px solid #000;
        background: #e1e4ec;
      }
      .nav {
        display: flex;
        align-items: center;
        gap: 1px;
        width: 68px;
        padding-left: 2px;
      }
      .nav button {
        display: grid;
        place-items: center;
        width: 15px;
        height: 14px;
        background: #b4b8cb;
        border: 1px solid #9195ab;
      }
      .sheets .tab {
        padding: 0 18px 0 7px;
        height: 14px;
        border: 1px solid #3c3e50;
        border-width: 0 1px 2px 0;
        background: #b9bdd0;
        font: 12px/12px "Liberation Sans", Arial, sans-serif;
        color: #15151c;
      }
      .sheets .tab.on {
        padding: 0 10px;
        background: #dfe2ec;
        border-left-width: 1px;
        font-weight: 700;
      }
      .status {
        display: flex;
        align-items: center;
        height: 20px;
        padding-left: 2px;
        border-top: 1px solid #5b5e70;
        border-bottom: 1px solid #1c1d26;
        background: linear-gradient(#ced2e4, #b9bdd2);
        font: 12px/16px Roboto, "Open Sans", sans-serif;
        color: #111;
      }
      .msg {
        flex: 1;
      }
      .field {
        padding: 0 4px;
        border-left: 1px solid #dfe1ea;
        border-right: 1px solid #dfe1ea;
      }
      .slot {
        width: 8px;
        height: 14px;
        border-right: 1px solid #dfe1ea;
      }
      .end {
        display: flex;
        align-items: center;
        gap: 51px;
        padding: 0 13px 0 11px;
      }
      .qh {
        font: bold 12px "Liberation Sans", sans-serif;
        fill: #0a8c1a;
      }
      .tip {
        position: absolute;
        z-index: 2;
        left: 16px;
        top: 138px;
        width: 200px;
        padding: 5px 5px 3px;
        border: 1px solid #8d8e98;
        border-radius: 8px;
        background: linear-gradient(135deg, #dddfe6, #f8f8fc 75%);
        box-shadow: 3px 3px 3px rgba(40, 40, 60, 0.5);
        font: 12px/15px Roboto, "Open Sans", sans-serif;
        color: #35356a;
      }
      .tip b {
        display: block;
        line-height: 14px;
        margin-bottom: 2px;
      }
      .tip p {
        margin: 0;
      }
      .tail {
        position: absolute;
        left: 10px;
        top: -38px;
      }
    `,
  ];
  render() {
    const nav = ["M1 0v7M7 0 2.500 3.500 7 7z", "M6 0 1.500 3.500 6 7z", "M2 0l4.500 3.500L2 7z", "M1 0l4.500 3.500L1 7zM7 0v7"];
    return html`<div class="app">
      <title-bar></title-bar>
      <command-ribbon></command-ribbon>
      <main class="body">
        <nav class="tabs">
          <button>Features</button><button class="on">Sketch</button><button>Evaluate</button><button>DimXpert</button
          ><button>Office Products</button>
        </nav>
        <feature-panel></feature-panel>
        <model-view></model-view>
      </main>
      <div class="sheets">
        <div class="nav">
          ${nav.map(
            (d, i) => html`<button aria-label=${["First", "Previous", "Next", "Last"][i]}>
              <svg class="ico" width="8" height="7" viewBox="0 0 8 7"><path d=${d} fill="#8b8fa6" stroke="#8b8fa6" /></svg>
            </button>`
          )}
        </div>
        <button class="tab on">Model</button><button class="tab">Motion Study 1</button>
      </div>
      <footer class="status">
        <span class="msg">Creates a new sketch, or edits an existing sketch.</span>
        <span class="slot"></span><span class="field">Editing Part</span><span class="slot"></span><span class="slot"></span>
        <span class="end"
          ><button aria-label="Quick tips">${icon(I.quick, 14, 14)}</button><button aria-label="Tags">${icon(I.tag)}</button></span
        >
      </footer>
      <div class="tip" role="tooltip">
        <svg class="tail ico" width="22" height="39" viewBox="0 0 22 39"><path d="M1.500 38.500V1L19.500 38.500" fill="#f1f2f6" stroke="#8d8e98" /><path d="M2 38.500h17" stroke="#e6e7ed" stroke-width="2" /></svg>
        <b>Sketch</b>
        <p>Creates a new sketch, or edits an existing sketch.</p>
      </div>
    </div>`;
  }
}
